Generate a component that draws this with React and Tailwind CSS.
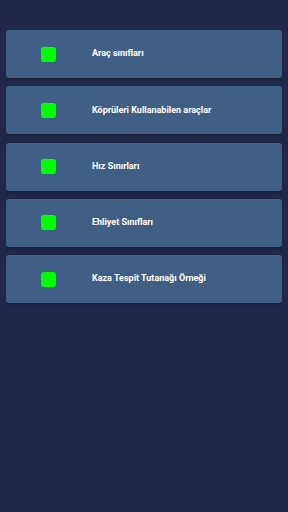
const items = [
  "Araç sınıfları",
  "Köprüleri Kullanabilen araçlar",
  "Hız Sınırları",
  "Ehliyet Sınıfları",
  "Kaza Tespit Tutanağı Örneği",
];

export default function App() {
  return (
    <div className="w-[288px] h-[512px] bg-[#20274a] px-[6px] pt-[30px] flex flex-col gap-[8.25px] font-['Roboto',sans-serif]">
      {items.map((title) => (
        <div
          key={title}
          className="h-[48px] rounded-[3px] bg-[#3f5f85] shadow-[0_1px_2px_rgba(0,0,0,0.3)] flex items-center">
          <div className="ml-[35px] w-[15px] h-[15px] rounded-[3px] bg-[#00ff00]" />
          <span className="ml-[36px] text-[9px] font-bold text-white">
            {title}
          </span>
        </div>
      ))}
    </div>
  );
}
